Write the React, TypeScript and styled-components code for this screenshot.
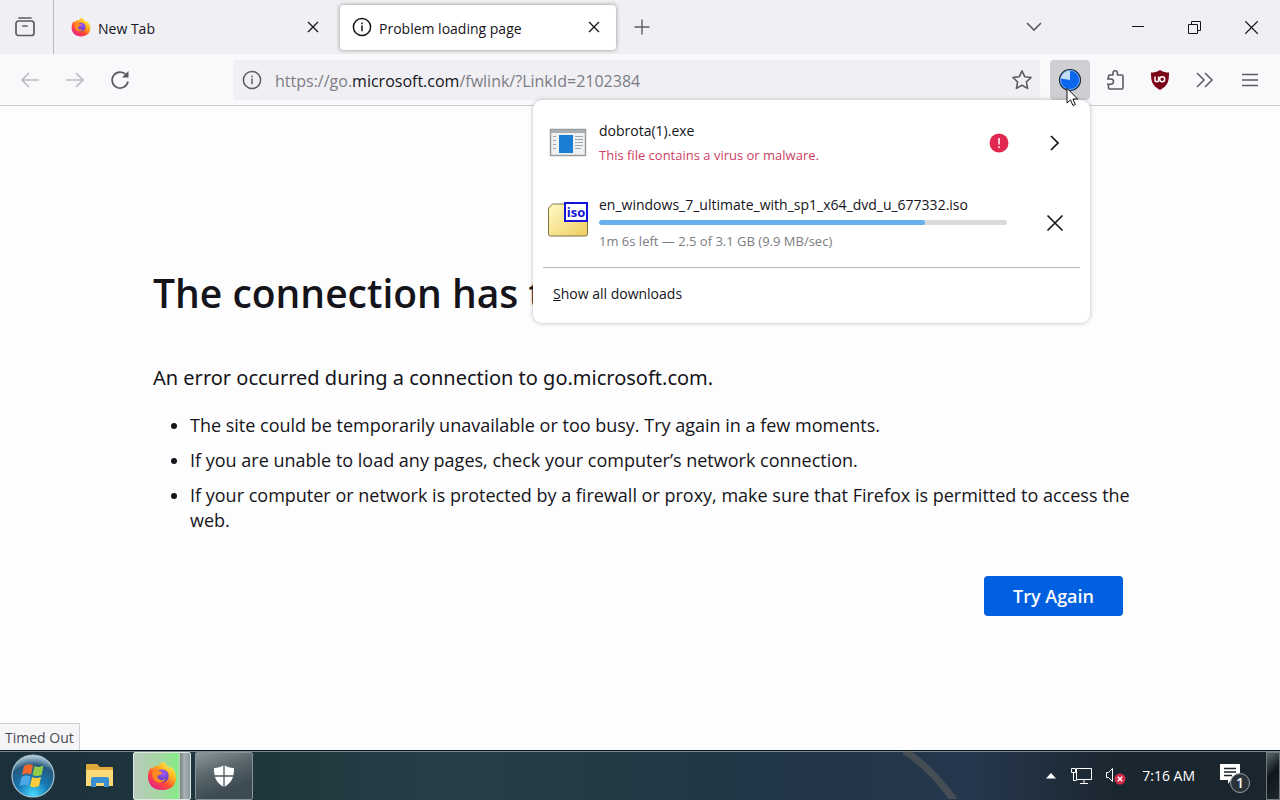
import React from "react";
import styled, { createGlobalStyle } from "styled-components";

const Global = createGlobalStyle`
  * { box-sizing: border-box; }
  body { margin: 0; background: #fdfdfd; font-family: "Open Sans", "Noto Sans", sans-serif; color: #15141a; }
  button, input { font-family: inherit; color: inherit; }
  button { border: 0; padding: 0; background: transparent; }
  svg { display: block; flex: none; }
`;

const Screen = styled.div`
  position: relative;
  min-height: 100vh;
  display: flex;
  flex-direction: column;
  overflow: hidden;
`;

const TabStrip = styled.header`
  display: flex;
  align-items: center;
  height: 54px;
  background: #f0f0f4;
`;

const IconButton = styled.button<{ $w?: number; $h?: number; $faint?: boolean; $pressed?: boolean }>`
  flex: none;
  display: flex;
  align-items: center;
  justify-content: center;
  width: ${(p) => p.$w ?? 40}px;
  height: ${(p) => p.$h ?? 40}px;
  border-radius: 4px;
  color: ${(p) => (p.$faint ? "#bcbcc0" : "#5b5b66")};
  background: ${(p) => (p.$pressed ? "#cfcfd3" : "transparent")};
`;

const FirefoxView = styled.div`
  display: flex;
  align-items: center;
  align-self: stretch;
  width: 54px;
  padding-left: 5px;
  border-right: 1px solid #b9b9bf;
`;

const Tabs = styled.div`
  display: flex;
  gap: 5px;
  margin: 0 6px 0 5px;
`;

const Tab = styled.div<{ $active?: boolean }>`
  display: flex;
  align-items: center;
  gap: 7px;
  width: 276px;
  height: 45px;
  padding: 0 12px;
  border-radius: 4px;
  font-size: 14px;
  background: ${(p) => (p.$active ? "#fff" : "transparent")};
  box-shadow: ${(p) => (p.$active ? "0 0 4px rgba(80, 80, 70, 0.6)" : "none")};
  & > span { flex: 1; padding-top: 2px; white-space: nowrap; }
  & > button { color: #15141a; }
`;

const WindowButtons = styled.div`
  display: flex;
  align-items: center;
  margin-left: auto;
  button { color: #15141a; }
  button:first-child { margin-right: 55px; }
`;

const NavBar = styled.nav`
  position: relative;
  display: flex;
  align-items: center;
  height: 52px;
  padding: 0 10px;
  background: #f9f9fb;
  border-bottom: 1px solid #ccccd0;
`;

const NavButtons = styled.div`
  display: flex;
  gap: 5px;
  width: 223px;
`;

const UrlBar = styled.div`
  flex: 1;
  display: flex;
  align-items: center;
  height: 40px;
  margin-right: 10px;
  border-radius: 4px;
  background: #f0f0f4;
`;

const Address = styled.div`
  flex: 1;
  padding: 2px 0 0 4px;
  font-size: 16px;
  line-height: 20px;
  color: #7c7c84;
  white-space: nowrap;
  strong { font-weight: 400; color: #15141a; }
`;

const Extensions = styled.div`
  display: flex;
  gap: 5px;
`;

const Panel = styled.section`
  position: absolute;
  top: 46px;
  right: 190px;
  z-index: 2;
  width: 557px;
  padding: 10px;
  border-radius: 9px;
  background: #fff;
  box-shadow: 0 0 4px rgba(58, 57, 68, 0.35);
  font-size: 14px;
`;

const Download = styled.div<{ $h: number; $top?: number }>`
  display: flex;
  align-items: center;
  height: ${(p) => p.$h}px;
  padding: ${(p) => p.$top ?? 0}px 0 0 5px;
`;

const DownloadInfo = styled.div`
  width: 408px;
  margin-left: 11px;
  line-height: 20px;
`;

const FileRow = styled.div`
  display: flex;
  align-items: center;
  justify-content: space-between;
`;

const Detail = styled.div<{ $alert?: boolean }>`
  margin-top: ${(p) => (p.$alert ? 4 : 6)}px;
  font-size: 13px;
  line-height: 20px;
  color: ${(p) => (p.$alert ? "#cc4064" : "#7c7c82")};
`;

const Progress = styled.progress`
  display: block;
  appearance: none;
  width: 100%;
  height: 5px;
  margin-top: 5px;
  border: 0;
  border-radius: 3px;
  overflow: hidden;
  &::-webkit-progress-bar { background: #dadada; }
  &::-webkit-progress-value { background: #67b0ee; border-radius: 3px; }
`;

const RowAction = styled(IconButton)`
  margin-left: auto;
  margin-right: 5px;
  color: #15141a;
`;

const PanelFooter = styled.footer`
  height: 46px;
  border-top: 1px solid #b8b8bc;
  padding: 16px 10px;
`;

const FooterButton = styled.button`
  display: block;
  font-size: 14px;
  line-height: 20px;
`;

const Page = styled.main`
  flex: 1;
  padding: 159px 157px 0 153px;
`;

const Title = styled.h1`
  margin: 0;
  font-size: 39px;
  line-height: 56px;
  font-weight: 600;
  white-space: nowrap;
`;

const Lead = styled.p`
  margin: 42px 0 0;
  font-family: "Noto Sans", "Open Sans", sans-serif;
  font-size: 20px;
  line-height: 30px;
`;

const Hints = styled.ul`
  margin: 20px -12px 0 0;
  padding-left: 37px;
  font-size: 18px;
  line-height: 25px;
  li + li { margin-top: 10px; }
`;

const Actions = styled.div`
  display: flex;
  justify-content: flex-end;
  margin-top: 43px;
`;

const Retry = styled.button`
  width: 139px;
  height: 40px;
  border-radius: 4px;
  background: #0060df;
  color: #fbfbfe;
  font-size: 18px;
  font-weight: 600;
`;

const Status = styled.div`
  align-self: flex-start;
  height: 27px;
  padding: 4px 5px 0;
  border: 1px solid #d0d0d4;
  border-left: 0;
  border-bottom: 0;
  background: #f5f5f8;
  color: #4a4a52;
  font-size: 14px;
  line-height: 20px;
`;

const Taskbar = styled.footer`
  position: relative;
  display: flex;
  align-items: center;
  height: 50px;
  border-top: 1px solid #0d161b;
  background: linear-gradient(90deg, #1c303b 0%, #20363d 20%, #263f46 35%, #233a45 48%, #213647 60%, #26374d 76%, #1b2730 87%, #1a252d 100%);
  color: #fff;
  box-shadow: inset 0 1px #7b898f;
`;

const Streak = styled.svg`
  position: absolute;
  left: 890px;
  top: 0;
`;

const StartButton = styled.button`
  margin: 0 14px 0 9px;
`;

const TaskButton = styled.button<{ $look?: "active" | "open" }>`
  display: flex;
  align-items: center;
  justify-content: center;
  width: 58px;
  height: 48px;
  margin-right: 4px;
  border-radius: 2px;
  border: 1px solid ${(p) => (p.$look === "active" ? "#dbe7df" : p.$look === "open" ? "#87939a" : "transparent")};
  background: ${(p) =>
    p.$look === "active"
      ? "linear-gradient(90deg, #b9cbbb 0%, #a3d8a1 50%, #84ec84 78%, #c4e6c6 81%, #75857e 82%, #a8b0b4 90%, #8b989d 100%)"
      : p.$look === "open"
        ? "linear-gradient(160deg, #8b969a, #57656b 40%, #3c4a51 75%)"
        : "transparent"};
`;

const Tray = styled.div`
  display: flex;
  align-items: center;
  margin-left: auto;
  height: 100%;
`;

const Clock = styled.time`
  margin: 0 25px 0 16px;
  font-size: 14px;
  white-space: nowrap;
`;

const ShowDesktop = styled.button`
  width: 14px;
  height: 48px;
  margin-left: 15px;
  border: 1px solid #6f7a80;
  background: linear-gradient(135deg, #5c686d, #0f171b 45%, #1d272c);
`;

const Pointer = styled.svg`
  position: absolute;
  right: 201px;
  top: 33px;
  z-index: 3;
`;

const Cross = ({ size = 12, w = 1.3 }: { size?: number; w?: number }) => (
  <svg width={size} height={size} viewBox="0 0 12 12" fill="none" stroke="currentColor" strokeWidth={w}>
    <path d="M1 1L11 11M11 1L1 11" />
  </svg>
);

const Info = ({ color }: { color: string }) => (
  <svg width="20" height="20" viewBox="0 0 20 20" fill="none" stroke={color} strokeWidth="1.5">
    <circle cx="10" cy="10" r="8.6" />
    <path d="M10 8.6V14.2M10 5.4V7.2" />
  </svg>
);

const Firefox = ({ size, id }: { size: number; id: string }) => (
  <svg width={size} height={size} viewBox="0 0 32 32">
    <defs>
      <linearGradient id={id} x1=".85" y1=".1" x2=".2" y2=".95">
        <stop offset="0" stopColor="#fff14a" />
        <stop offset=".35" stopColor="#ffa91e" />
        <stop offset=".65" stopColor="#ff4a35" />
        <stop offset="1" stopColor="#e4208a" />
      </linearGradient>
      <radialGradient id={id + "c"} cx=".6" cy=".3" r=".8">
        <stop offset="0" stopColor="#a557f5" />
        <stop offset="1" stopColor="#4a35b8" />
      </radialGradient>
    </defs>
    <path fill={`url(#${id})`} d="M17 1c4 2 5 5 6 7 1-1 1-2 1-3 5 4 7 8 7 13 0 8-6 13-15 13S1 25 1 17c0-4 1-8 4-11v3c2-3 4-4 7-4 1-1 3-3 5-4z" />
    <path fill={`url(#${id}c)`} d="M11 11c3-3 9-2 11 1 3 5 0 11-6 11-5 0-8-4-7-8 2 1 5 0 7-2-2 0-3-1-5-2z" />
    <path fill="#ff8a25" d="M6 10c4-2 6 0 10 2-1 3-4 3-5 4 0 4 5 6 9 3-3 6-12 5-14-2-1-3 0-5 0-7z" />
  </svg>
);

export default function App() {
  return (
    <Screen>
      <Global />
      <TabStrip>
        <FirefoxView>
          <IconButton aria-label="Firefox View">
            <svg width="20" height="20" viewBox="0 0 20 20" fill="none" stroke="currentColor" strokeWidth="1.7" strokeLinecap="round">
              <path d="M4 1h12" />
              <rect x="1" y="4" width="18" height="14.5" rx="2.5" />
              <path d="M8 9h4" />
            </svg>
          </IconButton>
        </FirefoxView>
        <Tabs>
          <Tab>
            <Firefox size={20} id="fxTab" />
            <span>New Tab</span>
            <IconButton $w={20} $h={20} aria-label="Close New Tab"><Cross /></IconButton>
          </Tab>
          <Tab $active>
            <Info color="#15141a" />
            <span>Problem loading page</span>
            <IconButton $w={20} $h={20} aria-label="Close Problem loading page"><Cross /></IconButton>
          </Tab>
        </Tabs>
        <IconButton aria-label="New tab">
          <svg width="16" height="16" viewBox="0 0 16 16" stroke="currentColor" strokeWidth="1.4"><path d="M8 .5v15M.5 8h15" /></svg>
        </IconButton>
        <WindowButtons>
          <IconButton aria-label="List all tabs">
            <svg width="16" height="10" viewBox="0 0 16 10" fill="none" stroke="#5b5b66" strokeWidth="1.6"><path d="M1 1l7 7 7-7" /></svg>
          </IconButton>
          <IconButton $w={57} aria-label="Minimize">
            <svg width="12" height="2" viewBox="0 0 12 2"><path fill="currentColor" d="M0 0h12v1H0z" /></svg>
          </IconButton>
          <IconButton $w={57} aria-label="Restore">
            <svg width="13" height="13" viewBox="0 0 13 13" fill="none" stroke="currentColor" strokeWidth="1"><path d="M.5 3.5h9v9h-9zM3.500 3.500v-3h9v9h-3" /></svg>
          </IconButton>
          <IconButton $w={57} aria-label="Close window"><Cross size={15} w={0.9} /></IconButton>
        </WindowButtons>
      </TabStrip>

      <NavBar>
        <NavButtons>
          <IconButton $faint aria-label="Back">
            <svg width="18" height="16" viewBox="0 0 18 16" fill="none" stroke="currentColor" strokeWidth="1.6"><path d="M18 8H1.500M8 1L1 8l7 7" /></svg>
          </IconButton>
          <IconButton $faint aria-label="Forward">
            <svg width="18" height="16" viewBox="0 0 18 16" fill="none" stroke="currentColor" strokeWidth="1.6"><path d="M0 8h16.500M10 1l7 7-7 7" /></svg>
          </IconButton>
          <IconButton aria-label="Reload">
            <svg width="20" height="20" viewBox="0 0 20 20" fill="none" stroke="currentColor" strokeWidth="1.7"><path d="M18 11.500A8 8 0 1 1 16 4.600" /><path fill="currentColor" stroke="none" d="M18.500 1v6.500H12z" /></svg>
          </IconButton>
        </NavButtons>
        <UrlBar>
          <IconButton $w={38} aria-label="Site information"><Info color="#5b5b66" /></IconButton>
          <Address>https://go.<strong>microsoft.com</strong>/fwlink/?LinkId=2102384</Address>
          <IconButton $w={36} aria-label="Bookmark this page">
            <svg width="22" height="22" viewBox="0 0 22 22" fill="none" stroke="currentColor" strokeWidth="1.6" strokeLinejoin="round"><path d="M11 1.800l2.700 5.900 6.400.8-4.700 4.400 1.200 6.500-5.600-3.200-5.600 3.200 1.200-6.500L1.900 8.500l6.400-.8z" /></svg>
          </IconButton>
        </UrlBar>
        <Extensions>
          <IconButton $pressed aria-label="Downloads">
            <svg width="24" height="24" viewBox="0 0 24 24"><circle cx="12" cy="12" r="10.500" fill="#0a66ee" stroke="#1d2b3b" strokeWidth="1.200" /><path fill="#c5dcf6" d="M12 12V2.500A9.500 9.500 0 0 0 2.600 10.500z" /><circle cx="12" cy="12" r="9.500" fill="none" stroke="#9fc7f4" strokeWidth=".7" /></svg>
          </IconButton>
          <IconButton aria-label="Extensions">
            <svg width="20" height="22" viewBox="0 0 20 22" fill="none" stroke="currentColor" strokeWidth="1.600" strokeLinejoin="round"><path d="M3.500 10V7q0-1 1-1H8V4a2.200 2.200 0 0 1 4.400 0v2H17q1 0 1 1v12q0 1-1 1H4.500q-1 0-1-1v-3.800h2.400a2.600 2.600 0 0 0 0-5.200H3.500zM3.500 15.200H2M3.500 10H2" /></svg>
          </IconButton>
          <IconButton aria-label="uBlock Origin">
            <svg width="20" height="22" viewBox="0 0 20 22"><path fill="#7c0418" d="M10 1c3 2 6 2.500 9 2.500 0 9-1 13-9 17.500C2 16.500 1 12.500 1 3.500 4 3.500 7 3 10 1z" /><path fill="none" stroke="#fff" strokeWidth="1.500" d="M5 7.500v3.300q0 2 1.800 2t1.800-2V7.500" /><circle cx="12.200" cy="10.200" r="2.500" fill="none" stroke="#fff" strokeWidth="1.500" /></svg>
          </IconButton>
          <IconButton aria-label="More tools">
            <svg width="18" height="16" viewBox="0 0 18 16" fill="none" stroke="currentColor" strokeWidth="1.500"><path d="M1 1l7 7-7 7M9 1l7 7-7 7" /></svg>
          </IconButton>
          <IconButton aria-label="Application menu">
            <svg width="16" height="14" viewBox="0 0 16 14" stroke="currentColor" strokeWidth="1.500"><path d="M0 1.500h16M0 7h16M0 12.500h16" /></svg>
          </IconButton>
        </Extensions>

        <Panel aria-label="Downloads">
          <Download $h={66}>
            <svg width="40" height="36" viewBox="0 0 40 36">
              <rect x="2.500" y="4.500" width="35" height="26" fill="#eef0f1" stroke="#989da0" strokeWidth="1.500" />
              <path fill="#a9aeb1" d="M3 5h34v3H3z" />
              <path fill="#1a7ed3" d="M11 10h14v18H11z" />
              <path stroke="#a3a9ad" d="M27 11.500h8M27 14.500h8M27 17.500h8M27 20.500h8M27 23.500h6M5 11.500h3M5 15.500h3M5 19.500h3M5 23.500h3" />
            </svg>
            <DownloadInfo>
              <FileRow>
                <div>
                  dobrota(1).exe
                  <Detail $alert>This file contains a virus or malware.</Detail>
                </div>
                <svg width="18" height="20" viewBox="0 0 18 20" overflow="visible" role="img" aria-label="Blocked"><circle cx="10" cy="10" r="9.500" fill="#e22850" /><path stroke="#fff" strokeWidth="1.500" d="M10 5v6.500M10 13.200v1.800" /></svg>
              </FileRow>
            </DownloadInfo>
            <RowAction aria-label="Show more information">
              <svg width="10" height="16" viewBox="0 0 10 16" fill="none" stroke="currentColor" strokeWidth="1.700"><path d="M1 1l7 7-7 7" /></svg>
            </RowAction>
          </Download>
          <Download $h={91} $top={3}>
            <svg width="40" height="42" viewBox="0 0 40 42">
              <defs><linearGradient id="iso" x2="1" y2="1"><stop stopColor="#fffbc4" /><stop offset="1" stopColor="#f0cc62" /></linearGradient></defs>
              <path fill="url(#iso)" stroke="#7c7440" d="M.500 32V6l4-4h12l3 3h20v27q0 2-2 2h-35q-2 0-2-2z" />
              <rect x="17" y="1" width="22" height="18" fill="#fff" stroke="#1414d8" strokeWidth="2" />
              <text x="28" y="15" textAnchor="middle" fontFamily="Open Sans, sans-serif" fontSize="13" fontWeight="700" fill="#1414d8">iso</text>
            </svg>
            <DownloadInfo>
              en_windows_7_ultimate_with_sp1_x64_dvd_u_677332.iso
              <Progress value={80} max={100} aria-label="Download progress" />
              <Detail>1m 6s left — 2.5 of 3.1 GB (9.9 MB/sec)</Detail>
            </DownloadInfo>
            <RowAction aria-label="Cancel download"><Cross size={18} w={1.1} /></RowAction>
          </Download>
          <PanelFooter>
            <FooterButton><u>S</u>how all downloads</FooterButton>
          </PanelFooter>
        </Panel>
        <Pointer width="13" height="20" viewBox="0 0 13 20"><path fill="#fff" stroke="#111" d="M1 1.200V16l3.500-3.200 2.400 5.700 2.400-1-2.400-5.500h4.700z" /></Pointer>
      </NavBar>

      <Page>
        <Title>The connection has timed out</Title>
        <Lead>An error occurred during a connection to go.microsoft.com.</Lead>
        <Hints>
          <li>The site could be temporarily unavailable or too busy. Try again in a few moments.</li>
          <li>If you are unable to load any pages, check your computer’s network connection.</li>
          <li>If your computer or network is protected by a firewall or proxy, make sure that Firefox is permitted to access the web.</li>
        </Hints>
        <Actions><Retry>Try Again</Retry></Actions>
      </Page>
      <Status role="status">Timed Out</Status>

      <Taskbar>
        <Streak width="110" height="48" viewBox="0 0 110 48" aria-hidden="true"><path d="M14 0Q40 15 66 52" fill="none" stroke="#6d6a5e" strokeOpacity=".45" strokeWidth="7" /></Streak>
        <StartButton aria-label="Start">
          <svg width="48" height="48" viewBox="0 0 48 48">
            <defs>
              <radialGradient id="orb" cx=".5" cy=".95" r=".95"><stop stopColor="#45dcff" /><stop offset=".4" stopColor="#1579b4" /><stop offset=".75" stopColor="#265a80" /><stop offset="1" stopColor="#c3d7e2" /></radialGradient>
            </defs>
            <circle cx="24" cy="24" r="21" fill="url(#orb)" stroke="#a9c6d4" strokeWidth="1.200" />
            <path fill="#f0682c" d="M15 14q5-3 9-.5l-2 9q-4-2-9 .5z" />
            <path fill="#93cc46" d="M25.500 14q4 2 9-.5l-2 9.500q-5 2-9 0z" />
            <path fill="#4ea9e6" d="M12.500 25q5-2.500 9-.5l-2 9.500q-4-2.500-9 0z" />
            <path fill="#fccd3b" d="M23 25q4 2 9 0l-2 9q-5 2.500-9 .3z" />
          </svg>
        </StartButton>
        <TaskButton aria-label="File Explorer">
          <svg width="28" height="26" viewBox="0 0 28 26"><path fill="#dda93b" d="M0 2q0-1 1-1h10l3 3h12q1 0 1 1v8H0z" /><path fill="#fad978" d="M0 7h27v16H0z" /><path fill="#3a8fd0" d="M5 24v-8q0-2 2-2h14q2 0 2 2v8h-5v-4h-8v4z" /></svg>
        </TaskButton>
        <TaskButton $look="active" aria-label="Firefox"><Firefox size={30} id="fxTask" /></TaskButton>
        <TaskButton $look="open" aria-label="Windows Security">
          <svg width="24" height="24" viewBox="0 0 24 24" fill="#fff"><path d="M12 1c3 2 6 3 10 3 0 9-2 15-10 19C4 19 2 13 2 4c4 0 7-1 10-3z" /><path d="M12 1v22M2 12h20" stroke="#4b5960" strokeWidth="1.300" /></svg>
        </TaskButton>
        <Tray>
          <svg width="10" height="6" viewBox="0 0 10 6"><path fill="#fff" d="M5 0l5 5.500H0z" /></svg>
          <IconButton $w={50} aria-label="Network">
            <svg width="21" height="18" viewBox="0 0 21 18" fill="none" stroke="#fff"><path d="M5.500 1.500h15v11h-15zM13 12.500v4M9 16.500h8M.5 1.500h4v4h-4zM2.500 5.500v8h3" /></svg>
          </IconButton>
          <svg width="20" height="20" viewBox="1 0 20 20"><path fill="none" stroke="#fff" d="M1.500 6.500h2l4-4v13l-4-4h-2z" /><circle cx="15" cy="13" r="5.500" fill="#d22b4a" /><path stroke="#fff" strokeWidth="1.400" d="M12.800 10.800l4.400 4.400M17.200 10.800l-4.400 4.400" /></svg>
          <Clock>7:16 AM</Clock>
          <svg width="31" height="36" viewBox="0 0 31 36">
            <path fill="#fff" d="M0 6h20v16h-9l-3 4v-4H0z" /><path stroke="#1a252d" strokeWidth="1.400" d="M4 10.500h12M4 14h12M4 17.500h8" />
            <circle cx="20" cy="25" r="9.500" fill="#2c3338" stroke="#99a0a4" />
            <text x="20" y="30" textAnchor="middle" fontFamily="Open Sans, sans-serif" fontSize="14" fontWeight="600" fill="#fff">1</text>
          </svg>
          <ShowDesktop aria-label="Show desktop" />
        </Tray>
      </Taskbar>
    </Screen>
  );
}
